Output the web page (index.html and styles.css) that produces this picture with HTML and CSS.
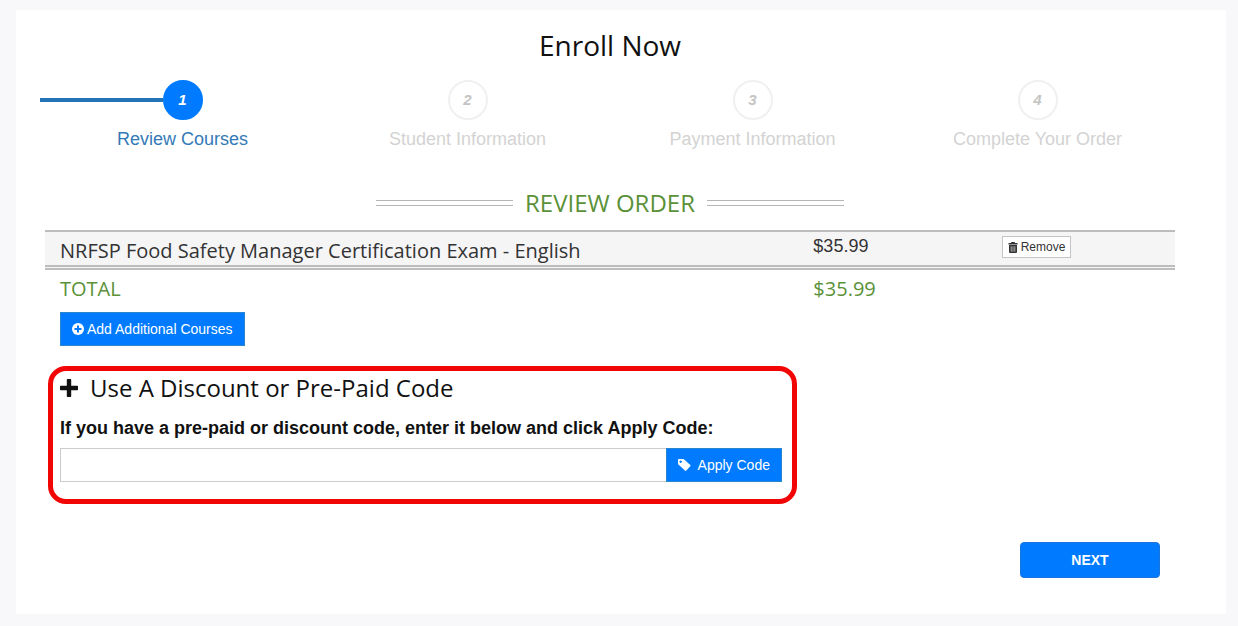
FILE: index.html
```html
<!DOCTYPE html>
<html lang="en">
<head>
<meta charset="utf-8">
<meta name="viewport" content="width=device-width, initial-scale=1">
<title>Enroll Now</title>
<link rel="stylesheet" href="styles.css">
</head>
<body>
<main class="card">
  <h1 class="title">Enroll Now</h1>

  <ol class="steps">
    <li class="step step-active"><span class="step-number">1</span><span class="step-label">Review Courses</span></li>
    <li class="step"><span class="step-number">2</span><span class="step-label">Student Information</span></li>
    <li class="step"><span class="step-number">3</span><span class="step-label">Payment Information</span></li>
    <li class="step"><span class="step-number">4</span><span class="step-label">Complete Your Order</span></li>
  </ol>

  <h2 class="section-title">REVIEW ORDER</h2>

  <table class="order">
    <tbody>
      <tr class="order-item">
        <td class="course">NRFSP Food Safety Manager Certification Exam - English</td>
        <td class="price">$35.99</td>
        <td class="action">
          <button type="button" class="remove">
            <svg class="icon-trash" viewBox="0 0 10 11" aria-hidden="true"><path fill="currentColor" fill-rule="evenodd" d="M3.200 0h3.600v1h2.700v1.500h-9V1h2.700zM1 3h8v7q0 1-1 1H2q-1 0-1-1zM2.800 4.200v5.500h.6V4.200zM4.700 4.200v5.500h.6V4.200zM6.600 4.200v5.500h.6V4.200z"/></svg>
            Remove
          </button>
        </td>
      </tr>
    </tbody>
    <tfoot>
      <tr class="order-total">
        <th scope="row">TOTAL</th>
        <td>$35.99</td>
        <td></td>
      </tr>
    </tfoot>
  </table>

  <button type="button" class="blue-button add-courses">
    <svg class="icon-add" viewBox="0 0 12 12" aria-hidden="true"><circle cx="6" cy="6" r="6" fill="currentColor"/><path fill="#007bff" d="M5 2.500h2V5h2.500v2H7v2.500H5V7H2.500V5H5z"/></svg>
    Add Additional Courses
  </button>

  <form class="discount">
    <h3 class="discount-title">
      <svg class="icon-plus" viewBox="0 0 18 18" aria-hidden="true"><path fill="currentColor" d="M7.500 0h3q.7 0 .7.700V6.800h6.100q.7 0 .7.700v3q0 .7-.7.700h-6.100v6.100q0 .7-.7.700h-3q-.7 0-.7-.7v-6.100H.7Q0 11.200 0 10.500v-3q0-.7.7-.7h6.100V.7q0-.7.700-.7z"/></svg>
      Use A Discount or Pre-Paid Code
    </h3>
    <label class="discount-label" for="code">If you have a pre-paid or discount code, enter it below and click Apply Code:</label>
    <div class="code-row">
      <input class="code-input" id="code" name="code" type="text">
      <button type="button" class="blue-button apply">
        <svg class="icon-tag" viewBox="0 0 13 12" aria-hidden="true"><path fill="currentColor" fill-rule="evenodd" d="M.9 0h4.300q.6 0 1 .4l6.100 5.500q.7.700 0 1.400l-4 4.200q-.7.700-1.400 0L.4 5.500Q0 5.100 0 4.500V.9Q0 0 .9 0zM2.700 1.500a1.200 1.200 0 1 0 .01 0z"/></svg>
        Apply Code
      </button>
    </div>
  </form>

  <div class="footer">
    <button type="button" class="next">NEXT</button>
  </div>
</main>
</body>
</html>
```
FILE: styles.css
```css
* {
  box-sizing: border-box;
}

body {
  margin: 0;
  padding: 10px 12px 12px 16px;
  background: #f8f8fb;
  color: #111;
  font-family: "Liberation Sans", Arial, sans-serif;
}

button {
  font-family: inherit;
  cursor: pointer;
}

.card {
  padding: 15px 46px 36px 24px;
  background: #fff;
}

.title {
  margin: 0 0 15px;
  font: 400 28px/40px "Open Sans", sans-serif;
  text-align: center;
}

.steps {
  display: grid;
  grid-template-columns: repeat(4, 1fr);
  margin: 0;
  padding: 0;
  list-style: none;
}

.step {
  display: grid;
  grid-template-columns: 1fr 40px 1fr;
  align-items: center;
  row-gap: 8px;
  color: #d3d3d3;
}

.step-number {
  grid-column: 2;
  height: 40px;
  border: 2px solid #f0f0f0;
  border-radius: 50%;
  color: #c4c4c4;
  font-size: 15px;
  font-style: italic;
  font-weight: 700;
  line-height: 36px;
  text-align: center;
}

.step-label {
  grid-column: 1 / -1;
  font-size: 18px;
  line-height: 22px;
  text-align: center;
}

.step-active {
  color: #337ab7;
}

.step-active::before {
  content: "";
  height: 4px;
  background: #2474b8;
}

.step-active .step-number {
  border-color: #007bff;
  background: #007bff;
  color: #fff;
}

.section-title {
  display: flex;
  align-items: center;
  justify-content: center;
  gap: 12px;
  margin: 36px 0 10px;
  color: #5b9138;
  font: 400 24px/34px "Open Sans", sans-serif;
}

.section-title::before,
.section-title::after {
  content: "";
  box-sizing: border-box;
  width: 12%;
  height: 6px;
  border: solid #b5b5b5;
  border-width: 1px 0;
}

.order {
  width: calc(100% - 10px);
  margin-left: 5px;
  border-collapse: separate;
  border-spacing: 0;
  table-layout: fixed;
}

.order td,
.order th {
  padding: 0 15px;
  font-weight: 400;
  text-align: left;
}

.order-item td {
  height: 40px;
  border-top: 2px solid #bdbdbd;
  border-bottom: 5px double #bdbdbd;
  background: #f5f5f6;
  vertical-align: top;
}

.order .course {
  width: 66.67%;
  padding-top: 5px;
  color: #333;
  font: 400 20px/28px "Open Sans", sans-serif;
}

.order .price {
  padding-top: 2px;
  color: #333;
  font-size: 18px;
  line-height: 24px;
}

.order .action {
  padding-top: 4px;
  font-size: 0;
}

.remove {
  display: inline-flex;
  align-items: center;
  gap: 3px;
  height: 22px;
  padding: 0 5px;
  border: 1px solid #c4c4c4;
  background: #fff;
  color: #333;
  font-size: 12px;
}

.icon-trash {
  width: 10px;
  height: 11px;
}

.order-total th,
.order-total td {
  padding-top: 5px;
  color: #5b9138;
  font: 400 20px/28px "Open Sans", sans-serif;
}

.blue-button {
  display: inline-flex;
  align-items: center;
  justify-content: center;
  height: 34px;
  padding: 0 11px;
  border: 1px solid #2b86cf;
  background: #007bff;
  color: #fff;
  font-size: 14px;
}

.add-courses {
  display: flex;
  gap: 3px;
  margin: 9px 0 20px 20px;
}

.icon-add {
  width: 12px;
  height: 12px;
}

.discount {
  width: 65.7%;
  margin-left: 8px;
  padding: 0 10px 17px 7px;
  border: 5px solid #f20505;
  border-radius: 18px;
}

.discount-title {
  display: flex;
  align-items: center;
  gap: 12px;
  margin: 0 0 12px;
  font: 400 24px/34px "Open Sans", sans-serif;
}

.icon-plus {
  width: 18px;
  height: 18px;
}

.discount-label {
  display: block;
  margin-bottom: 9px;
  font-size: 18px;
  font-weight: 700;
  line-height: 22px;
}

.code-row {
  display: flex;
}

.code-input {
  flex: 1;
  min-width: 0;
  height: 34px;
  padding: 0 12px;
  border: 1px solid #ccc;
  border-right: 0;
  font-size: 14px;
}

.apply {
  gap: 7px;
}

.icon-tag {
  width: 13px;
  height: 12px;
}

.footer {
  display: flex;
  justify-content: flex-end;
  margin-top: 38px;
  padding-right: 20px;
}

.next {
  width: 140px;
  height: 36px;
  border: 1px solid #1a75dc;
  border-radius: 4px;
  background: #007bff;
  color: #fff;
  font-size: 14px;
  font-weight: 700;
}
```
